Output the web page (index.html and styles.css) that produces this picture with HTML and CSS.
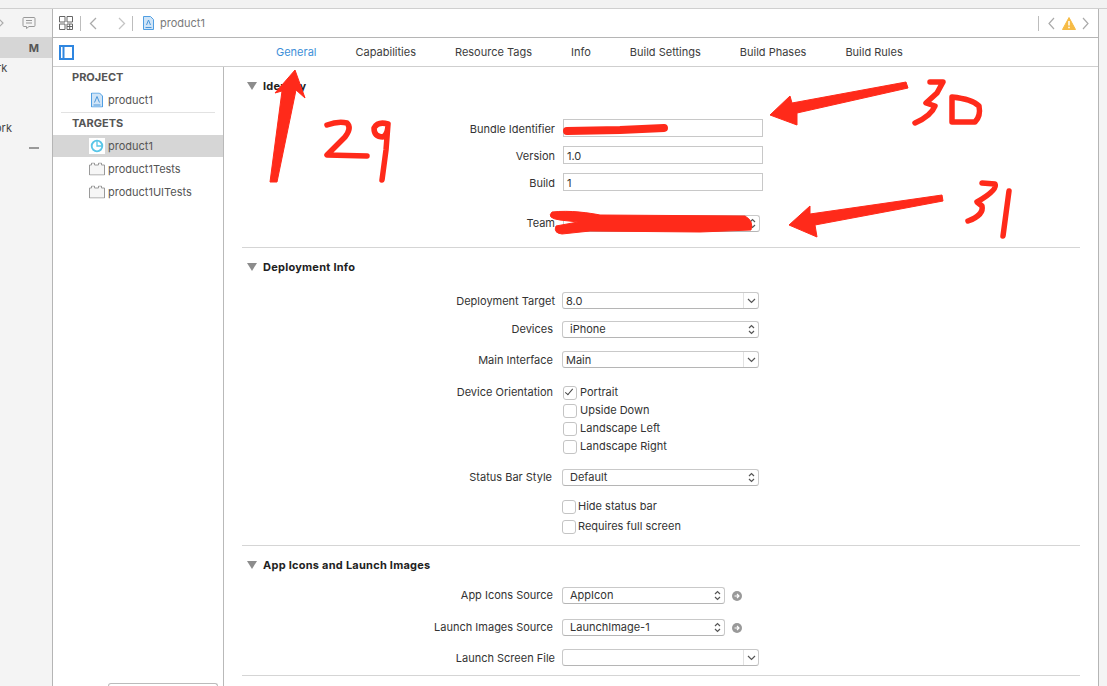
FILE: index.html
```html
<!DOCTYPE html>
<html lang="en">
<head>
<meta charset="utf-8">
<title>product1</title>
<link rel="stylesheet" href="styles.css">
</head>
<body>
<div class="page">
  <div class="title-strip"></div>
  <div class="columns">
    <aside class="navigator">
      <div class="nav-tools">
        <svg class="nav-chevron" width="6" height="12" viewBox="0 0 6 12"><path d="M0 2l4 4-4 4" fill="none" stroke="#aaa" stroke-width="1.2"/></svg>
        <svg class="nav-comment" width="14" height="14" viewBox="0 0 14 14"><path d="M2 1.500h10a1 1 0 0 1 1 1v7a1 1 0 0 1-1 1H7l-2.500 2v-2H2a1 1 0 0 1-1-1v-7a1 1 0 0 1 1-1zM4 4.500h6M4 7h6" fill="none" stroke="#999" stroke-width="1"/></svg>
      </div>
      <div class="nav-selected"><b>M</b></div>
      <div class="nav-file nav-rk">rk</div>
      <div class="nav-file nav-ork">ork</div>
      <div class="nav-dash"></div>
    </aside>

    <div class="main">
      <header class="toolbar">
        <svg class="tool-grid" width="14" height="14" viewBox="0 0 14 14"><path d="M.5.500h5.500v5.500H.5zM8 .500h5.500v5.500H8zM.5 8h5.500v5.500H.5zM8 10.500h5.500M10.700 8v5.500M8 8h5.500v5.500H8z" fill="none" stroke="#666" stroke-width="1"/></svg>
        <span class="tool-sep"></span>
        <svg class="tool-back" width="8" height="13" viewBox="0 0 8 13"><path d="M7 1L1.500 6.500 7 12" fill="none" stroke="#aaa" stroke-width="1.300"/></svg>
        <svg class="tool-forward" width="8" height="13" viewBox="0 0 8 13"><path d="M1 1l5.500 5.500L1 12" fill="none" stroke="#c4c4c4" stroke-width="1.300"/></svg>
        <span class="tool-sep tool-sep-b"></span>
        <svg class="tool-file" width="11" height="14" viewBox="0 0 11 14"><path d="M.5.500h7l3 3v10H.5z" fill="#cfe4f7" stroke="#4f9ee2"/><path d="M2.500 11.500h6M3.500 9l2-5 2 5" fill="none" stroke="#4b97da"/></svg>
        <span class="crumb">product1</span>
        <span class="tool-issues">
          <span class="tool-sep"></span>
          <svg width="7" height="13" viewBox="0 0 7 13"><path d="M6 1L1 6.500 6 12" fill="none" stroke="#aaa" stroke-width="1.200"/></svg>
          <svg class="warn" width="14" height="13" viewBox="0 0 14 13"><path d="M7 .500l6.500 12H.5z" fill="#f6bb45" stroke="#f6bb45" stroke-linejoin="round"/><path d="M7 4v4.500M7 9.800v1.400" stroke="#fff" stroke-width="1.500"/></svg>
          <svg width="7" height="13" viewBox="0 0 7 13"><path d="M1 1l5 5.500L1 12" fill="none" stroke="#aaa" stroke-width="1.200"/></svg>
        </span>
      </header>

      <nav class="tabs">
        <svg class="panel-toggle" width="15" height="15" viewBox="0 0 15 15"><path d="M1 1h13v13H1z" fill="#fff" stroke="#2f86e0" stroke-width="2"/><path d="M4.500 1v13" stroke="#2f86e0" stroke-width="2"/></svg>
        <ul class="tab-list">
          <li class="tab active">General</li>
          <li class="tab">Capabilities</li>
          <li class="tab">Resource Tags</li>
          <li class="tab">Info</li>
          <li class="tab">Build Settings</li>
          <li class="tab">Build Phases</li>
          <li class="tab">Build Rules</li>
        </ul>
      </nav>

      <div class="body">
        <aside class="targets">
          <h4 class="targets-head head-project">PROJECT</h4>
          <div class="target-item">
            <svg class="item-icon" width="12" height="15" viewBox="0 0 12 15"><path d="M.5.500h8l3 3v11H.5z" fill="#cfe4f7" stroke="#4f9ee2"/><path d="M2.500 12.500h7M3.500 10l2.500-6 2.500 6" fill="none" stroke="#4b97da"/></svg>
            <span>product1</span>
          </div>
          <div class="targets-sep"></div>
          <h4 class="targets-head">TARGETS</h4>
          <div class="target-item selected">
            <svg class="item-icon wide-icon" width="16" height="16" viewBox="0 0 16 16"><rect width="16" height="16" fill="#fff"/><circle cx="8" cy="8" r="5.300" fill="none" stroke="#58c6e8" stroke-width="1.800"/><path d="M8 3v5h5" fill="none" stroke="#58c6e8" stroke-width="1.300"/></svg>
            <span>product1</span>
          </div>
          <div class="target-item item-b">
            <svg class="item-icon wide-icon" width="16" height="13" viewBox="0 0 16 13"><path d="M.5 2.500h2v-2h3v2h4v-2h3v2h3v10H.5z" fill="#f6f6f6" stroke="#9a9a9a"/></svg>
            <span>product1Tests</span>
          </div>
          <div class="target-item item-b">
            <svg class="item-icon wide-icon" width="16" height="13" viewBox="0 0 16 13"><path d="M.5 2.500h2v-2h3v2h4v-2h3v2h3v10H.5z" fill="#f6f6f6" stroke="#9a9a9a"/></svg>
            <span>product1UITests</span>
          </div>
          <div class="filter"></div>
        </aside>

        <section class="editor">
          <div class="section sec-identity">
            <h3 class="section-head"><i class="tri"></i>Identity</h3>
            <div class="form form-identity">
              <div class="row text-row"><label>Bundle Identifier</label><div class="input wide"></div></div>
              <div class="row text-row mt9"><label>Version</label><div class="input wide">1.0</div></div>
              <div class="row text-row mt9"><label>Build</label><div class="input wide">1</div></div>
              <div class="row lift mt24"><label>Team</label><div class="popup team"><span></span><svg class="updown" width="7" height="11" viewBox="0 0 7 11"><path d="M1 4l2.500-2.500L6 4M1 7l2.500 2.500L6 7" fill="none" stroke="#555" stroke-width="1.200"/></svg></div></div>
            </div>
          </div>

          <div class="section sec-deploy">
            <h3 class="section-head"><i class="tri"></i>Deployment Info</h3>
            <div class="form form-deploy">
              <div class="row row-b"><label>Deployment Target</label><div class="combo full"><span>8.0</span><b><svg width="9" height="6" viewBox="0 0 9 6"><path d="M1 1l3.500 3.500L8 1" fill="none" stroke="#555" stroke-width="1.200"/></svg></b></div></div>
              <div class="row row-b row-c lift mt12"><label>Devices</label><div class="popup full"><span>iPhone</span><svg class="updown" width="7" height="11" viewBox="0 0 7 11"><path d="M1 4l2.500-2.500L6 4M1 7l2.500 2.500L6 7" fill="none" stroke="#555" stroke-width="1.200"/></svg></div></div>
              <div class="row row-b row-c mt13"><label>Main Interface</label><div class="combo full"><span>Main</span><b><svg width="9" height="6" viewBox="0 0 9 6"><path d="M1 1l3.500 3.500L8 1" fill="none" stroke="#555" stroke-width="1.200"/></svg></b></div></div>
              <div class="row row-b row-c mt15 check-row"><label>Device Orientation</label><div class="check on">Portrait</div></div>
              <div class="row row-b row-c check-row"><label></label><div class="check">Upside Down</div></div>
              <div class="row row-b row-c check-row"><label></label><div class="check">Landscape Left</div></div>
              <div class="row row-b row-c check-row"><label></label><div class="check">Landscape Right</div></div>
              <div class="row row-b row-d lift mt14"><label>Status Bar Style</label><div class="popup full"><span>Default</span><svg class="updown" width="7" height="11" viewBox="0 0 7 11"><path d="M1 4l2.500-2.500L6 4M1 7l2.500 2.500L6 7" fill="none" stroke="#555" stroke-width="1.200"/></svg></div></div>
              <div class="row row-b mt11 check-row"><label></label><div class="check check-b">Hide status bar</div></div>
              <div class="row row-b mt2 check-row"><label></label><div class="check check-b">Requires full screen</div></div>
            </div>
          </div>

          <div class="section sec-icons">
            <h3 class="section-head"><i class="tri"></i>App Icons and Launch Images</h3>
            <div class="form form-icons">
              <div class="row row-b row-c lift"><label>App Icons Source</label><div class="popup short"><span>AppIcon</span><svg class="updown" width="7" height="11" viewBox="0 0 7 11"><path d="M1 4l2.500-2.500L6 4M1 7l2.500 2.500L6 7" fill="none" stroke="#555" stroke-width="1.200"/></svg></div><svg class="go" width="10" height="10" viewBox="0 0 10 10"><circle cx="5" cy="5" r="5" fill="#999"/><path d="M2.500 5h4M5 3l2 2-2 2" fill="none" stroke="#fff" stroke-width="1.200"/></svg></div>
              <div class="row row-b row-c lift mt15"><label>Launch Images Source</label><div class="popup short"><span>LaunchImage-1</span><svg class="updown" width="7" height="11" viewBox="0 0 7 11"><path d="M1 4l2.500-2.500L6 4M1 7l2.500 2.500L6 7" fill="none" stroke="#555" stroke-width="1.200"/></svg></div><svg class="go" width="10" height="10" viewBox="0 0 10 10"><circle cx="5" cy="5" r="5" fill="#999"/><path d="M2.500 5h4M5 3l2 2-2 2" fill="none" stroke="#fff" stroke-width="1.200"/></svg></div>
              <div class="row row-b mt13"><label>Launch Screen File</label><div class="combo full"><span></span><b><svg width="9" height="6" viewBox="0 0 9 6"><path d="M1 1l3.500 3.500L8 1" fill="none" stroke="#555" stroke-width="1.200"/></svg></b></div></div>
            </div>
          </div>
        </section>
      </div>
    </div>
    <div class="gutter"></div>
  </div>

  <svg class="markup" width="1107" height="686" viewBox="0 0 1107 686">
    <g class="ink-fill">
      <path d="M295 70L305 98 296 90 277 182 270 182 282 91 275 93z"/>
      <path d="M770 115L790 96 792 103 906 82 908 88 797 113 797 125z"/>
      <path d="M789 225L810 206 810 214 942 195 943 201 815 225 817 237z"/>
      <path d="M552 212C570 210 590 213 600 215L745 216Q754 221 751 230L700 232 590 231 562 234Q553 233 556 226L578 222 560 220Q546 218 552 212z"/>
    </g>
    <g class="ink-line">
      <path d="M327 125Q338 121 347 123 352 128 345 137L327 155 367 156"/>
      <path d="M388 124Q378 121 374 128 374 137 383 137 388 134 388 124L386 150 382 180"/>
      <path d="M930 82L943 82 937 93 926 103 935 106Q931 116 915 123"/>
      <path d="M952 97L952 122 975 122Q981 116 979 106 972 99 952 97"/>
      <path d="M982 183L995 184Q998 190 977 202L982 206Q984 215 968 221"/>
      <path d="M1009 191L1003 236"/>
    </g>
    <path class="ink-scrub" d="M567 131L620 130 664 128"/>
  </svg>
</div>
</body>
</html>
```

FILE: styles.css
```css
* { box-sizing: border-box; }
html, body { margin: 0; padding: 0; }
body { font-family: Inter, "Liberation Sans", sans-serif; font-size: 11px; color: #333; }

.page { position: relative; width: 1107px; height: 686px; overflow: hidden; background: #f4f4f4; display: flex; flex-direction: column; }
.title-strip { height: 9px; flex: none; background: #f2f2f2; border-bottom: 1px solid #cfcfcf; }
.columns { flex: 1; display: flex; min-height: 0; }

/* navigator */
.navigator { width: 53px; flex: none; border-right: 1px solid #b5b5b5; background: #f4f4f4; overflow: hidden; }
.nav-tools { height: 28px; display: flex; align-items: center; }
.nav-chevron { margin-left: -1px; }
.nav-comment { margin-left: 17px; }
.nav-selected { height: 21px; background: #d6d6d6; display: flex; align-items: center; justify-content: flex-end; padding-right: 13px; color: #555; font-size: 11px; }
.nav-file { height: 14px; line-height: 14px; color: #444; }
.nav-rk { margin: 3px 0 0 -3px; }
.nav-ork { margin: 46px 0 0 -5px; }
.nav-dash { width: 10px; height: 2px; background: #999; margin: 12px 0 0 29px; }

/* main */
.main { flex: 1; min-width: 0; display: flex; flex-direction: column; background: #fff; }
.toolbar { height: 29px; flex: none; display: flex; align-items: center; padding-left: 6px; border-bottom: 1px solid #b5b5b5; }
.tool-grid { flex: none; }
.tool-sep { width: 1px; height: 15px; background: #bdbdbd; flex: none; }
.toolbar > .tool-sep { margin-left: 7px; }
.tool-back { margin-left: 8px; }
.tool-forward { margin-left: 21px; }
.toolbar > .tool-sep-b { margin-left: 6px; }
.tool-file { margin-left: 10px; }
.crumb { margin-left: 6px; color: #7a7a7a; font-size: 11px; }
.tool-issues { margin-left: auto; margin-right: 9px; display: flex; align-items: center; gap: 6px; }
.tool-issues .tool-sep { margin-right: 3px; }
.warn { margin-left: 1px; }

.tabs { height: 29px; flex: none; display: flex; align-items: center; padding-left: 6px; border-bottom: 1px solid #cfcfcf; }
.panel-toggle { flex: none; }
.tab-list { list-style: none; display: flex; gap: 39px; margin: 0 0 0 202px; padding: 0; color: #3c3c3c; }
.tab.active { color: #3d8fd8; }

.body { flex: 1; display: flex; min-height: 0; }
.targets { width: 171px; flex: none; border-right: 1px solid #b9b9b9; display: flex; flex-direction: column; color: #555; }
.targets-head { margin: 0; height: 14px; line-height: 14px; padding-left: 19px; font-size: 11px; font-weight: 700; color: #555; }
.head-project { margin: 3px 0 4px; }
.target-item { height: 23px; display: flex; align-items: center; position: relative; padding-left: 55px; }
.item-icon { position: absolute; left: 38px; top: 50%; transform: translateY(-50%); }
.wide-icon { left: 36px; }
.targets-sep { height: 1px; background: #e2e2e2; margin: 1px 8px 3px; }
.target-item.selected { background: #d6d6d6; height: 22px; margin-top: 5px; }
.filter { margin: auto 0 0 55px; width: 110px; height: 3px; border: 1px solid #bbb; border-bottom: 0; border-radius: 4px 4px 0 0; }

/* editor */
.editor { flex: 1; min-width: 0; }
.section { margin: 0 18px; padding-top: 12px; border-bottom: 1px solid #d5d5d5; }
.sec-identity { padding-bottom: 15px; }
.sec-deploy { padding-bottom: 10px; }
.sec-icons { padding-bottom: 9px; }
.section-head { margin: 0; height: 14px; line-height: 14px; font-size: 11px; font-weight: 700; letter-spacing: .25px; color: #222; display: flex; align-items: center; }
.tri { width: 0; height: 0; margin: 0 6px 0 5px; border-left: 5px solid transparent; border-right: 5px solid transparent; border-top: 8px solid #8c8c8c; }

.form-identity { margin-top: 26px; }
.form-deploy { margin-top: 18px; }
.form-icons { margin-top: 15px; }

.row { display: grid; grid-template-columns: 321px auto auto; justify-content: start; align-items: center; }
.row label { text-align: right; padding-right: 8px; white-space: nowrap; color: #333; }
.row-b { grid-template-columns: 320px auto auto; }
.row-b label { padding-right: 7px; }
.row-c label { padding-right: 9px; }
.row-d label { padding-right: 10px; }
.text-row label { padding-top: 2px; }
.lift label { padding-bottom: 2px; }
.lift .popup { padding-bottom: 2px; }
.lift .updown { margin-top: 2px; }
.mt2 { margin-top: 2px; }
.mt9 { margin-top: 9px; }
.mt11 { margin-top: 11px; }
.mt12 { margin-top: 12px; }
.mt13 { margin-top: 13px; }
.mt14 { margin-top: 14px; }
.mt15 { margin-top: 15px; }
.mt24 { margin-top: 24px; }

.input { height: 18px; line-height: 18px; border: 1px solid #c8c8c8; padding-left: 3px; color: #333; background: #fff; }
.wide { width: 200px; }

.popup, .combo { height: 17px; border: 1px solid #c9c9c9; border-bottom-color: #b5b5b5; border-radius: 3px; display: flex; align-items: center; justify-content: space-between; background: #fff; color: #333; }
.popup { padding: 0 3px 0 7px; }
.combo { padding-left: 3px; }
.combo b { width: 15px; height: 100%; border-left: 1px solid #e2e2e2; display: flex; align-items: center; justify-content: center; }
.full { width: 197px; }
.team { width: 197px; }
.short { width: 163px; }
.go { margin-left: 7px; }

.check-row { height: 18px; }
.check { position: relative; padding-left: 17px; white-space: nowrap; color: #333; margin-left: 1px; }
.check::before { content: ""; position: absolute; left: 0; top: 50%; width: 12px; height: 12px; margin-top: -6px; border: 1px solid #c4c4c4; border-radius: 3px; background: #fff; }
.check.on::after { content: ""; position: absolute; left: 4px; top: 50%; width: 3px; height: 7px; margin-top: -5px; border: solid #444; border-width: 0 1.500px 1.500px 0; transform: rotate(40deg); }
.check-b { margin-left: 0; padding-left: 16px; }

.gutter { width: 9px; flex: none; border-left: 1px solid #b5b5b5; background: #f4f4f4; }

/* hand-drawn annotation layer */
.markup { position: absolute; left: 0; top: 0; pointer-events: none; }
.ink-fill { fill: #ff2a1a; stroke: #ff2a1a; stroke-width: 1; stroke-linejoin: round; }
.ink-line { fill: none; stroke: #ff2a1a; stroke-width: 5.500px; stroke-linecap: round; stroke-linejoin: round; }
.ink-scrub { fill: none; stroke: #ff2a1a; stroke-width: 8px; stroke-linecap: round; stroke-linejoin: round; }
```
